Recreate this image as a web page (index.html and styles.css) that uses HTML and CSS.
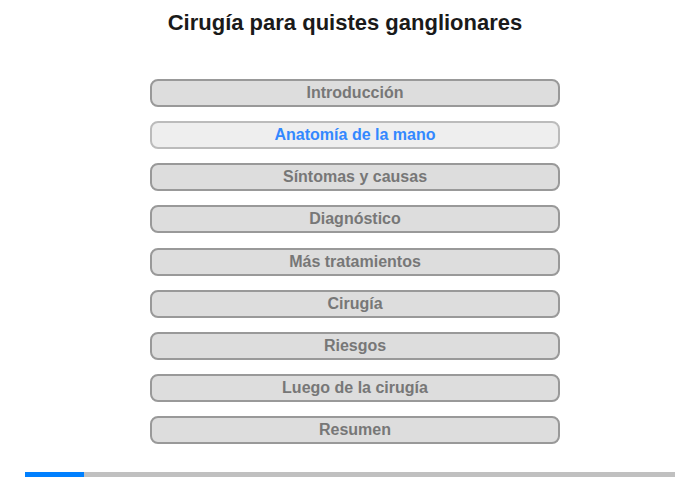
FILE: index.html
```html
<!DOCTYPE html>
<html lang="es">
<head>
<meta charset="utf-8">
<title>Cirugía para quistes ganglionares</title>
<link rel="stylesheet" href="styles.css">
</head>
<body>
<div class="page">
  <h1 class="title">Cirugía para quistes ganglionares</h1>
  <nav class="menu">
    <div class="item">Introducción</div>
    <div class="item active">Anatomía de la mano</div>
    <div class="item">Síntomas y causas</div>
    <div class="item">Diagnóstico</div>
    <div class="item">Más tratamientos</div>
    <div class="item">Cirugía</div>
    <div class="item">Riesgos</div>
    <div class="item">Luego de la cirugía</div>
    <div class="item">Resumen</div>
  </nav>
  <div class="progress"><div class="progress-fill" style="width:59px"></div></div>
</div>
</body>
</html>
```
FILE: styles.css
```css
html, body {
  margin: 0;
  padding: 0;
  background: #fff;
}
.page {
  width: 700px;
  height: 480px;
  font-family: "Liberation Sans", Arial, sans-serif;
  display: flex;
  flex-direction: column;
  align-items: center;
}
.title {
  margin: 10px 10px 0 0;
  font-size: 22px;
  font-weight: bold;
  color: #1a1a1a;
  line-height: 26px;
  height: 26px;
}
.menu {
  margin: 43px 0 0 10px;
  display: flex;
  flex-direction: column;
  gap: 14.125px;
  width: 410px;
}
.item {
  box-sizing: border-box;
  height: 28px;
  border: 2px solid #999;
  border-radius: 8px;
  background: #ddd;
  color: #777;
  font-size: 16px;
  font-weight: bold;
  text-align: center;
  line-height: 24px;
}
.item.active {
  background: #eee;
  border-color: #bbb;
  color: #3388ff;
}
.progress {
  margin-top: 28px;
  width: 650px;
  height: 5px;
  background: #c0c0c0;
}
.progress-fill {
  height: 5px;
  background: #0080ff;
}
```
